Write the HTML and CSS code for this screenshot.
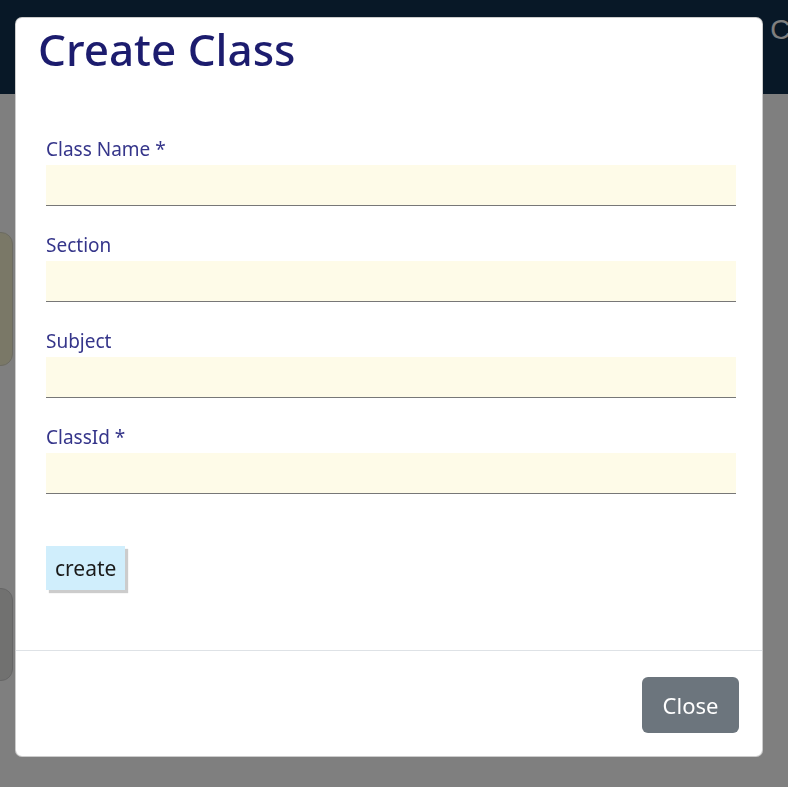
FILE: index.html
```html
<!DOCTYPE html>
<html>
<head>
<meta charset="utf-8">
<link rel="stylesheet" href="styles.css">
</head>
<body>
<div class="page">
  <nav class="navbar"><span class="brand">Classroom</span></nav>
  <main class="content">
    <div class="card card-yellow"></div>
    <div class="card card-gray"></div>
  </main>
</div>
<div class="backdrop"></div>
<div class="modal">
  <div class="modal-header">
    <h1 class="modal-title">Create Class</h1>
  </div>
  <div class="modal-body">
    <form class="form">
      <label class="field">
        <span class="label">Class Name *</span>
        <input class="input" type="text">
      </label>
      <label class="field">
        <span class="label">Section</span>
        <input class="input" type="text">
      </label>
      <label class="field">
        <span class="label">Subject</span>
        <input class="input" type="text">
      </label>
      <label class="field">
        <span class="label">ClassId *</span>
        <input class="input" type="text">
      </label>
      <div class="actions">
        <button type="button" class="btn-create">create</button>
      </div>
    </form>
  </div>
  <div class="modal-footer">
    <button type="button" class="btn-close">Close</button>
  </div>
</div>
</body>
</html>
```
FILE: styles.css
```css
* { box-sizing: border-box; }
html, body { margin: 0; padding: 0; }
body {
  width: 788px;
  height: 787px;
  overflow: hidden;
  font-family: "Noto Sans", "Open Sans", sans-serif;
  background: #ffffff;
}
.page { height: 787px; }
.navbar {
  height: 94px;
  background: #10304e;
  display: flex;
  justify-content: flex-end;
  padding-top: 14px;
  overflow: hidden;
}
.brand {
  font-family: "Liberation Sans", Arial, sans-serif;
  font-size: 28px;
  color: #ffffff;
  margin-right: -116px;
  white-space: nowrap;
}
.content {
  display: flex;
  flex-direction: column;
  padding-top: 138px;
}
.card {
  border-radius: 12px;
  margin-left: -40px;
  width: 53px;
}
.card-yellow {
  height: 134px;
  background: #f4f0cf;
  border: 1px solid #d8d6c4;
}
.card-gray {
  margin-top: 222px;
  height: 93px;
  background: #e2e2e0;
  border: 1px solid #cccccc;
}
.backdrop {
  position: fixed;
  inset: 0;
  background: rgba(0, 0, 0, 0.5);
}
.modal {
  position: fixed;
  left: 15px;
  top: 17px;
  width: 748px;
  height: 740px;
  background: #ffffff;
  border: 1px solid rgba(0, 0, 0, 0.2);
  border-radius: 7px;
  display: flex;
  flex-direction: column;
}
.modal-header {
  padding: 0 22px 0;
  height: 92px;
}
.modal-title {
  margin: 0;
  font-size: 44px;
  font-weight: 500;
  color: #1c1c6e;
  line-height: 62px;
}
.modal-body {
  flex: 1;
  padding: 0 26px 0 30px;
  border-bottom: 1px solid #dee2e6;
}
.form {
  display: flex;
  flex-direction: column;
  padding-top: 24px;
}
.field {
  display: flex;
  flex-direction: column;
  margin-bottom: 24px;
}
.label {
  font-size: 19px;
  line-height: 30px;
  color: #35358a;
  margin-bottom: 1px;
}
.input {
  height: 41px;
  border: none;
  border-bottom: 1px solid #777777;
  background: #fefbe8;
  outline: none;
  padding: 0;
}
.actions {
  padding-top: 28px;
}
.btn-create {
  border: none;
  background: #d0eefc;
  font-family: "Noto Sans", "Open Sans", sans-serif;
  font-size: 21px;
  color: #1a1a1a;
  height: 44px;
  padding: 0 9px;
  box-shadow: 3px 3px 1px #cccccc;
}
.modal-footer {
  height: 105px;
  display: flex;
  justify-content: flex-end;
  align-items: center;
  padding: 2px 23px 0 0;
}
.btn-close {
  border: none;
  border-radius: 6px;
  background: #6c757d;
  color: #ffffff;
  font-family: "Noto Sans", "Open Sans", sans-serif;
  font-size: 22px;
  width: 97px;
  height: 56px;
}
```
